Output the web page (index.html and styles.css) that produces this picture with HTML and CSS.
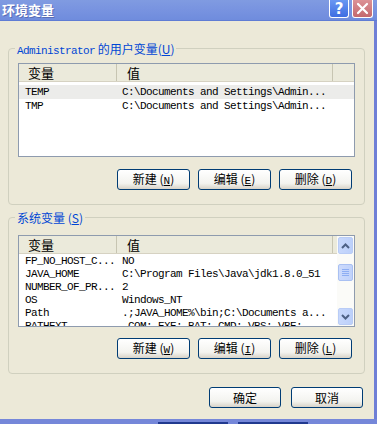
FILE: index.html
```html
<!DOCTYPE html>
<html lang="zh-CN">
<head>
    <meta charset="UTF-8">
    <meta name="viewport" content="width=device-width, initial-scale=1.0">
    <title>环境变量</title>
    <link rel="stylesheet" href="styles.css">
</head>
<body>
    <div class="window">
        <!-- Title Bar -->
        <div class="titlebar">
            <span class="title">环境变量</span>
            <div class="title-buttons">
                <span class="tbtn help">?</span>
                <span class="tbtn close">
                    <svg width="13" height="13" viewBox="0 0 13 13"><path d="M2 2 L11 11 M11 2 L2 11" stroke="#fff" stroke-width="2.2" stroke-linecap="round"/></svg>
                </span>
            </div>
        </div>

        <div class="dialog">
            <!-- User variables -->
            <div class="group">
                <div class="group-title"><span class="mono">Administrator</span> 的用户变量(<u>U</u>)</div>
                <div class="listview user-list">
                    <div class="list-main">
                        <div class="list-header">
                            <div class="head-name">变量</div>
                            <div class="head-value">值</div>
                            <div class="head-rest"></div>
                        </div>
                        <div class="rows">
                            <div class="row selected"><div class="col-name">TEMP</div><div class="col-value">C:\Documents and Settings\Admin...</div></div>
                            <div class="row"><div class="col-name">TMP</div><div class="col-value">C:\Documents and Settings\Admin...</div></div>
                        </div>
                    </div>
                </div>
                <div class="button-row">
                    <button class="btn">新建 (<u>N</u>)</button>
                    <button class="btn">编辑 (<u>E</u>)</button>
                    <button class="btn">删除 (<u>D</u>)</button>
                </div>
            </div>

            <!-- System variables -->
            <div class="group system-group">
                <div class="group-title">系统变量 (<u>S</u>)</div>
                <div class="listview system-list">
                    <div class="list-main">
                        <div class="list-header">
                            <div class="head-name">变量</div>
                            <div class="head-value">值</div>
                            <div class="head-rest"></div>
                        </div>
                        <div class="rows">
                            <div class="row"><div class="col-name">FP_NO_HOST_C...</div><div class="col-value">NO</div></div>
                            <div class="row"><div class="col-name">JAVA_HOME</div><div class="col-value">C:\Program Files\Java\jdk1.8.0_51</div></div>
                            <div class="row"><div class="col-name">NUMBER_OF_PR...</div><div class="col-value">2</div></div>
                            <div class="row"><div class="col-name">OS</div><div class="col-value">Windows_NT</div></div>
                            <div class="row"><div class="col-name">Path</div><div class="col-value">.;JAVA_HOME%\bin;C:\Documents a...</div></div>
                            <div class="row"><div class="col-name">PATHEXT</div><div class="col-value">.COM;.EXE;.BAT;.CMD;.VBS;.VBE;</div></div>
                        </div>
                    </div>
                    <div class="scrollbar">
                        <div class="sb-btn">
                            <svg width="9" height="6" viewBox="0 0 9 6"><path d="M1 5 L4.5 1.5 L8 5" fill="none" stroke="#4D6185" stroke-width="2"/></svg>
                        </div>
                        <div class="sb-track">
                            <div class="sb-thumb"><span></span><span></span><span></span><span></span></div>
                        </div>
                        <div class="sb-btn">
                            <svg width="9" height="6" viewBox="0 0 9 6"><path d="M1 1 L4.5 4.5 L8 1" fill="none" stroke="#4D6185" stroke-width="2"/></svg>
                        </div>
                    </div>
                </div>
                <div class="button-row">
                    <button class="btn">新建 (<u>W</u>)</button>
                    <button class="btn">编辑 (<u>I</u>)</button>
                    <button class="btn">删除 (<u>L</u>)</button>
                </div>
            </div>

            <!-- OK / Cancel -->
            <div class="dialog-buttons">
                <button class="btn wide">确定</button>
                <button class="btn wide">取消</button>
            </div>
        </div>

        <!-- Window frame bottom -->
        <div class="frame-bottom">
            <span class="task"></span>
            <span class="task"></span>
        </div>
    </div>
</body>
</html>
```

FILE: styles.css
```css
/* General Page Styling */
body {
    margin: 0;
    font-family: "Noto Sans CJK SC", "Liberation Sans", sans-serif;
    font-size: 12px;
    color: #000;
    background-color: #ECE9D8;
}

.window {
    width: 377px;
    height: 424px;
    display: flex;
    flex-direction: column;
    overflow: hidden;
}

/* Title Bar */
.titlebar {
    height: 20px;
    flex-shrink: 0;
    display: flex;
    justify-content: space-between;
    align-items: flex-start;
    background: linear-gradient(#809BE1, #7893E0 50%, #6F8CDD);
    border-bottom: 1px solid #5F7CD4;
}

.title {
    color: #fff;
    font-weight: bold;
    font-size: 13px;
    line-height: 20px;
    padding-left: 2px;
    text-shadow: 1px 1px 0 #5A6DB5;
}

.title-buttons {
    display: flex;
    gap: 3px;
    padding-right: 4px;
}

.tbtn {
    width: 20px;
    height: 18px;
    box-sizing: border-box;
    border: 1px solid #fff;
    border-top: none;
    border-radius: 0 0 3px 3px;
    display: flex;
    align-items: center;
    justify-content: center;
}

.help {
    background: linear-gradient(#6A97F2, #3E6DE2);
    color: #fff;
    font: bold 15px "DejaVu Sans", sans-serif;
}

.close {
    width: 21px;
    background: linear-gradient(#DC9296, #C4686D);
}

/* Dialog body */
.dialog {
    flex: 1;
    display: flex;
    flex-direction: column;
    border-right: 3px solid #6F7FD6;
    padding-top: 27px;
}

.group {
    margin: 0 9px 0 8px;
    border: 1px solid #D0D0BF;
    border-radius: 4px;
    padding: 0 9px 14px 9px;
}

.system-group {
    margin-top: 12px;
}

.group-title {
    width: fit-content;
    height: 14px;
    line-height: 14px;
    margin: -7px 0 0 -3px;
    padding: 0 2px;
    background-color: #ECE9D8;
    color: #0046D5;
}

.mono {
    font-family: "Liberation Mono", monospace;
    font-size: 11px;
    letter-spacing: -0.6px;
}

/* List view */
.listview {
    display: flex;
    box-sizing: border-box;
    border: 1px solid #8E9BAE;
    background-color: #fff;
    margin-top: 7px;
}

.user-list {
    height: 94px;
}

.system-list {
    height: 92px;
    margin-top: 10px;
}

.list-main {
    flex: 1;
    overflow: hidden;
}

.list-header {
    display: flex;
    height: 18px;
    line-height: 17px;
    font-size: 13px;
    background-color: #EBEADB;
    border-bottom: 1px solid #D6D2C2;
    box-sizing: border-box;
}

.head-name,
.head-value {
    border-right: 1px solid #C7C5B2;
    box-sizing: border-box;
}

.head-name {
    width: 98px;
    padding-left: 9px;
}

.head-value {
    width: 216px;
    padding-left: 10px;
}

.rows {
    padding-top: 1px;
    font-family: "Liberation Mono", monospace;
    font-size: 11px;
    letter-spacing: -0.6px;
}

.user-list .rows {
    padding-top: 3px;
}

.row {
    display: flex;
    height: 14px;
    line-height: 14px;
    white-space: nowrap;
}

.system-list .row {
    height: 13px;
    line-height: 13px;
}

.row.selected {
    background-color: #ECECEA;
}

.col-name {
    width: 98px;
    padding-left: 6px;
    box-sizing: border-box;
}

.col-value {
    padding-left: 5px;
}

/* Scroll bar */
.scrollbar {
    width: 17px;
    display: flex;
    flex-direction: column;
    background-color: #FBFBF8;
}

.sb-btn {
    height: 15px;
    margin: 1px;
    border: 1px solid #B9CCF6;
    border-radius: 2px;
    background: linear-gradient(90deg, #C8D8FC, #BCD0FA);
    display: flex;
    align-items: center;
    justify-content: center;
}

.sb-track {
    flex: 1;
    padding-top: 9px;
}

.sb-thumb {
    height: 17px;
    margin: 0 1px;
    box-sizing: border-box;
    border: 1px solid #A9C0F2;
    border-radius: 2px;
    background: linear-gradient(90deg, #CCDAFC, #C0D2FA);
    display: flex;
    flex-direction: column;
    align-items: center;
    justify-content: center;
    gap: 1px;
}

.sb-thumb span {
    width: 7px;
    height: 1px;
    background-color: #8EAEF3;
}

/* Buttons */
.button-row {
    display: flex;
    justify-content: flex-end;
    gap: 8px;
    margin-top: 12px;
    padding-right: 3px;
}

.system-group .button-row {
    margin-top: 11px;
}

.btn {
    width: 73px;
    height: 21px;
    padding: 0;
    border: 1px solid #003C74;
    border-radius: 3px;
    background: linear-gradient(#FFFFFF, #F3F3EF 70%, #D8D3C8);
    font-family: "Noto Sans CJK SC", sans-serif;
    font-size: 12px;
    line-height: 18px;
    color: #000;
}

.btn u {
    font-family: "Liberation Mono", monospace;
    font-size: 11px;
}

.dialog-buttons {
    display: flex;
    justify-content: flex-end;
    gap: 10px;
    margin: 13px 11px 0 0;
}

.btn.wide {
    width: 72px;
}

/* Window frame bottom */
.frame-bottom {
    height: 5px;
    flex-shrink: 0;
    display: flex;
    align-items: flex-end;
    gap: 10px;
    padding-left: 158px;
    background-color: #7587D9;
}

.task {
    width: 70px;
    height: 2px;
    background-color: #21398F;
}
```
